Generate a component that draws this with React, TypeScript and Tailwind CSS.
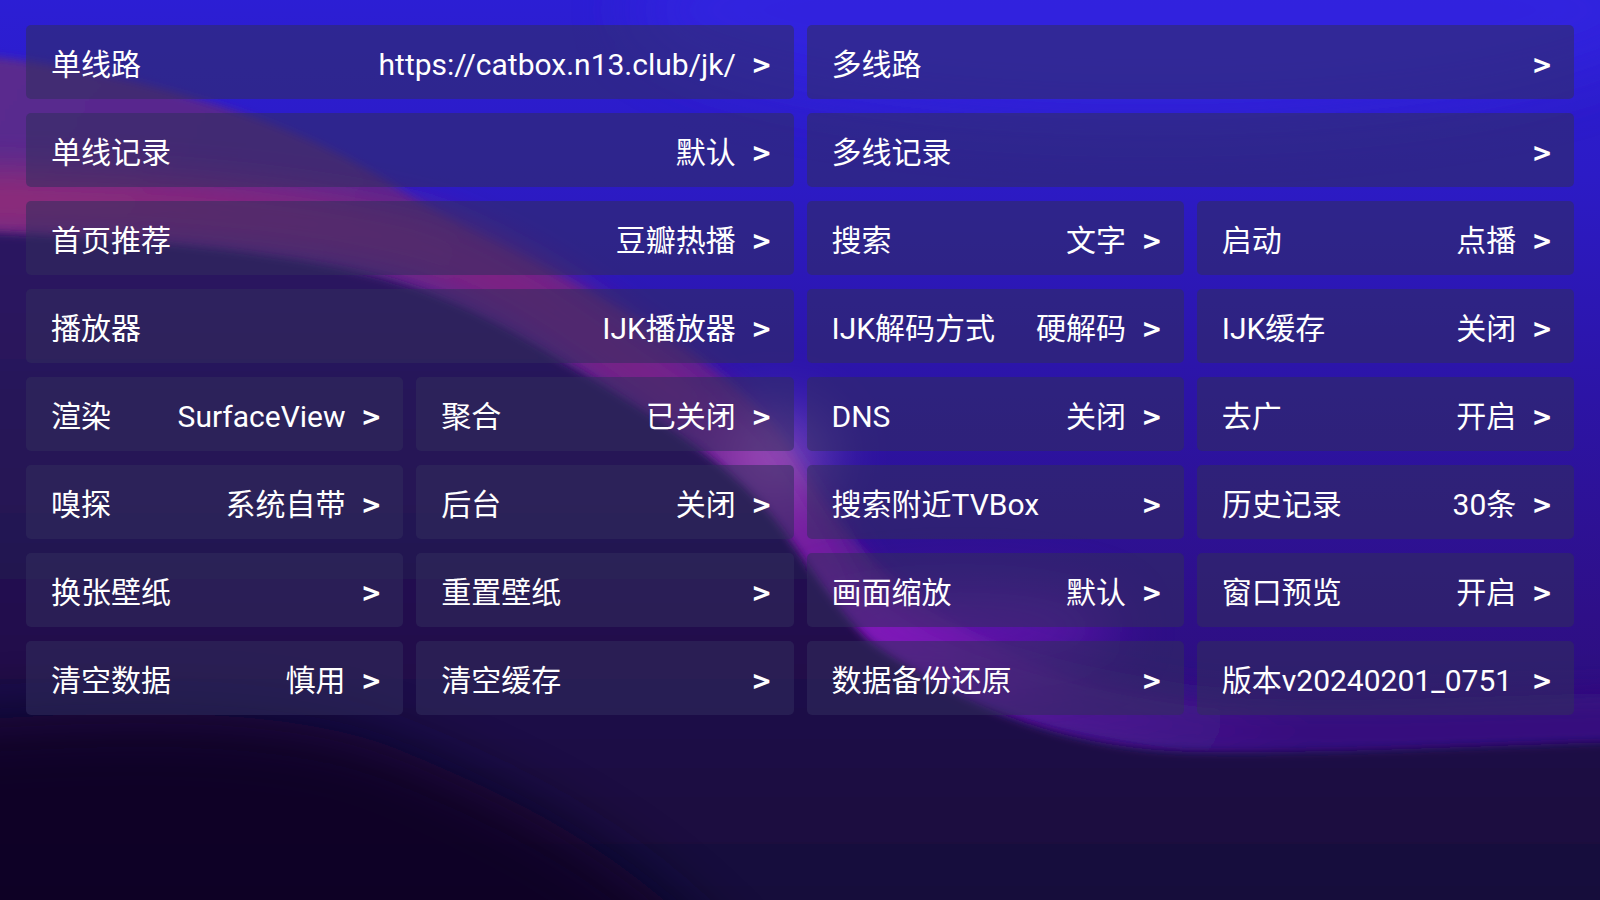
import React from "react";

type Item = {
  label: string;
  value?: string;
  span?: 2;
};

const items: Item[] = [
  { label: "单线路", value: "https://catbox.n13.club/jk/", span: 2 },
  { label: "多线路", span: 2 },
  { label: "单线记录", value: "默认", span: 2 },
  { label: "多线记录", span: 2 },
  { label: "首页推荐", value: "豆瓣热播", span: 2 },
  { label: "搜索", value: "文字" },
  { label: "启动", value: "点播" },
  { label: "播放器", value: "IJK播放器", span: 2 },
  { label: "IJK解码方式", value: "硬解码" },
  { label: "IJK缓存", value: "关闭" },
  { label: "渲染", value: "SurfaceView" },
  { label: "聚合", value: "已关闭" },
  { label: "DNS", value: "关闭" },
  { label: "去广", value: "开启" },
  { label: "嗅探", value: "系统自带" },
  { label: "后台", value: "关闭" },
  { label: "搜索附近TVBox" },
  { label: "历史记录", value: "30条" },
  { label: "换张壁纸" },
  { label: "重置壁纸" },
  { label: "画面缩放", value: "默认" },
  { label: "窗口预览", value: "开启" },
  { label: "清空数据", value: "慎用" },
  { label: "清空缓存" },
  { label: "数据备份还原" },
  { label: "版本v20240201_0751" },
];

// wallpaper: blue on top, a mauve/magenta ridge running diagonally, dark bottom-left
function Wallpaper() {
  return (
    <svg
      className="absolute inset-0 h-full w-full"
      viewBox="0 0 1600 900"
      preserveAspectRatio="none"
    >
      <defs>
        <linearGradient id="base" x1="0" y1="0" x2="0" y2="1">
          <stop offset="0" stopColor="#2c20dc" />
          <stop offset="0.25" stopColor="#2c1bc6" />
          <stop offset="0.45" stopColor="#2c14a6" />
          <stop offset="0.65" stopColor="#2e0f88" />
          <stop offset="0.82" stopColor="#2a0e74" />
          <stop offset="0.9" stopColor="#1a0948" />
          <stop offset="1" stopColor="#130734" />
        </linearGradient>
        <linearGradient id="ridge" gradientUnits="userSpaceOnUse" x1="0" y1="60" x2="1200" y2="760">
          <stop offset="0" stopColor="#5a2a8e" />
          <stop offset="0.5" stopColor="#522090" />
          <stop offset="1" stopColor="#3a1284" />
        </linearGradient>
        <linearGradient id="edge" gradientUnits="userSpaceOnUse" x1="0" y1="230" x2="1300" y2="740">
          <stop offset="0" stopColor="#8a2a7a" />
          <stop offset="0.45" stopColor="#762286" />
          <stop offset="0.7" stopColor="#7418ac" />
          <stop offset="0.85" stopColor="#4a1490" />
          <stop offset="1" stopColor="#36107e" />
        </linearGradient>
        <linearGradient id="dark" x1="0" y1="0" x2="0" y2="1">
          <stop offset="0" stopColor="#2c1862" />
          <stop offset="0.5" stopColor="#22114e" />
          <stop offset="1" stopColor="#140834" />
        </linearGradient>
        <filter id="soft" filterUnits="userSpaceOnUse" x="-300" y="-300" width="2200" height="1500">
          <feGaussianBlur stdDeviation="4" />
        </filter>
        <filter id="mid" filterUnits="userSpaceOnUse" x="-300" y="-300" width="2200" height="1500">
          <feGaussianBlur stdDeviation="16" />
        </filter>
        <filter id="wide" filterUnits="userSpaceOnUse" x="-300" y="-300" width="2200" height="1500">
          <feGaussianBlur stdDeviation="30" />
        </filter>
      </defs>
      <rect x="-100" y="-100" width="1800" height="1100" fill="url(#base)" />
      <ellipse cx="1150" cy="10" rx="520" ry="110" fill="#3428e6" opacity="0.6" filter="url(#wide)" />
      <path
        d="M-100,50 C100,56 300,120 400,190 C470,236 520,254 560,277 C620,310 660,330 700,360 C750,400 770,420 790,450 C830,520 900,625 1100,690 C1250,722 1450,705 1700,695 L1700,1000 L-100,1000 Z"
        fill="url(#ridge)"
        filter="url(#soft)"
      />
      <path
        d="M-100,200 C150,202 300,215 420,245 C520,280 580,330 640,370 C700,410 725,432 752,462 C785,505 805,545 835,592 C880,645 980,700 1200,730 C1350,738 1500,728 1700,724"
        fill="none"
        stroke="url(#edge)"
        strokeWidth="66"
        filter="url(#mid)"
      />
      <ellipse cx="775" cy="455" rx="55" ry="45" fill="#c88ae0" opacity="0.45" filter="url(#wide)" />
      <ellipse cx="960" cy="628" rx="160" ry="36" fill="#8e1ccc" opacity="0.55" filter="url(#wide)" />
      <path
        d="M-100,230 C100,234 280,250 380,277 C460,300 510,330 560,360 C620,395 660,420 700,450 C740,480 770,510 790,540 C820,582 840,612 870,642 C960,704 1060,750 1200,752 C1350,754 1500,744 1700,740 L1700,1000 L-100,1000 Z"
        fill="url(#dark)"
        filter="url(#soft)"
      />
      <path
        d="M-100,725 C150,705 300,710 400,750 C520,800 650,860 760,1000 L-100,1000 Z"
        fill="#0a0420"
        opacity="0.85"
        filter="url(#wide)"
      />
    </svg>
  );
}

function Row({ item }: { item: Item }) {
  return (
    <div
      className={`flex h-[74px] items-baseline justify-between rounded-[5px] bg-[rgba(50,46,92,0.55)] pl-[25px] pr-[23px] pt-[22px] text-[30px] text-white ${
        item.span === 2 ? "col-span-2" : ""
      }`}
    >
      <span className="whitespace-nowrap">{item.label}</span>
      <span className="flex items-baseline gap-[17px] whitespace-nowrap">
        {item.value && <span>{item.value}</span>}
        <span className="translate-y-[2px] font-['Noto_Sans_CJK_SC',sans-serif] font-bold">&gt;</span>
      </span>
    </div>
  );
}

export default function App() {
  return (
    <div
      className="relative h-[900px] w-[1600px] overflow-hidden bg-[#120630]"
      style={{ fontFamily: "Roboto, 'Noto Sans CJK SC', sans-serif" }}
    >
      <Wallpaper />
      <div className="relative grid grid-cols-4 gap-x-[13px] gap-y-[14px] px-[26px] pt-[25px] leading-none">
        {items.map((item) => (
          <Row key={item.label} item={item} />
        ))}
      </div>
    </div>
  );
}
